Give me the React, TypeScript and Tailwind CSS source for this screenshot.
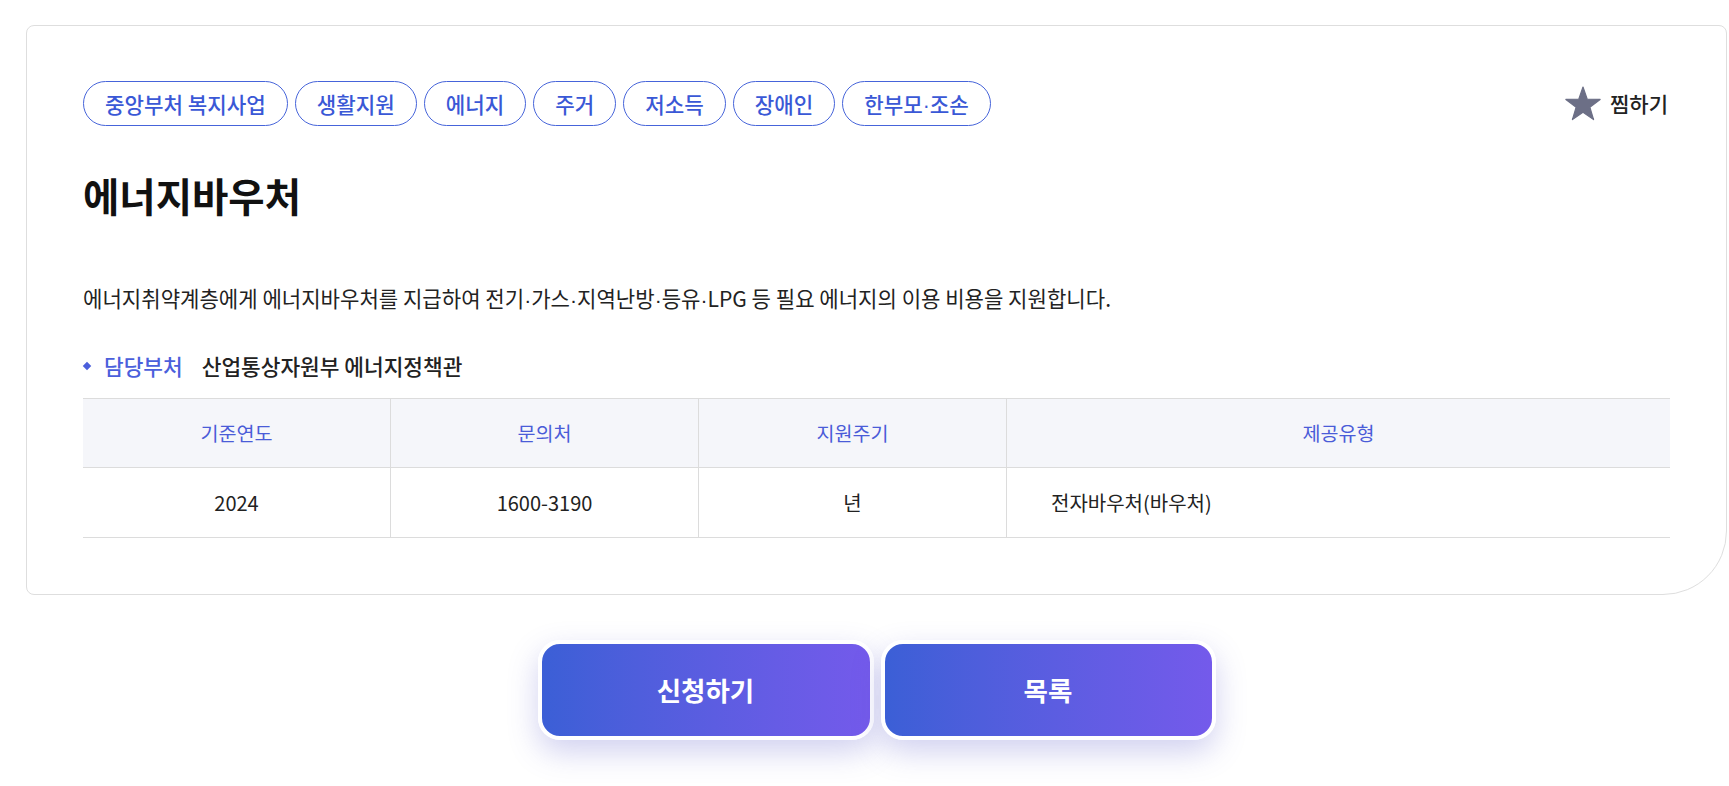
import React from 'react';

const TAGS = ['중앙부처 복지사업', '생활지원', '에너지', '주거', '저소득', '장애인', '한부모·조손'];

const COLUMNS = [
  { head: '기준연도', value: '2024', align: 'center' },
  { head: '문의처', value: '1600-3190', align: 'center' },
  { head: '지원주기', value: '년', align: 'center' },
  { head: '제공유형', value: '전자바우처(바우처)', align: 'left' },
];

// the CJK font draws · very wide, so the dot gets a latin face
const withDots = (text: string) =>
  text.split('·').map((part, i) => (
    <React.Fragment key={i}>
      {i > 0 && <span className="font-['Liberation_Sans',sans-serif] leading-[0]">·</span>}
      {part}
    </React.Fragment>
  ));

const StarIcon = () => (
  <svg width="36" height="35" viewBox="0 0 36 35" className="overflow-visible" aria-hidden="true">
    <path
      d="M18 1 L22.23 13.18 L35.12 13.44 L24.85 21.22 L28.58 33.56 L18 26.2 L7.42 33.56 L11.15 21.22 L0.88 13.44 L13.77 13.18 Z"
      fill="#6c6f86"
      stroke="#6c6f86"
      strokeWidth="1.2"
      strokeLinejoin="round"
    />
  </svg>
);

export default function App() {
  return (
    <div className="min-h-screen bg-white pt-[25px] pb-10 font-['Noto_Sans_CJK_KR','Noto_Sans',sans-serif] text-[#222]">
      <div className="ml-[26px] w-[1701px] rounded-lg rounded-br-[64px] border border-[#dedede] bg-white px-[56px] pt-[55px] pb-[56px]">
        <div className="flex h-[45px] items-center justify-between">
          <div className="flex gap-[7px]">
            {TAGS.map(tag => (
              <span
                key={tag}
                className="h-[45px] rounded-full border border-[#4664da] px-[21px] py-[8px] text-[21.2px] leading-[27px] font-medium text-[#3a58d6]"
              >
                {withDots(tag)}
              </span>
            ))}
          </div>
          <button className="mr-[2px] flex items-center gap-[9px] text-[21px] font-medium text-[#222]">
            <StarIcon />
            찜하기
          </button>
        </div>

        <h1 className="mt-[45px] text-[39.5px] leading-[48px] font-bold text-[#111]">에너지바우처</h1>

        <p className="mt-[64px] h-[30px] text-[21.1px] leading-[30px] text-[#222]">
          {withDots('에너지취약계층에게 에너지바우처를 지급하여 전기·가스·지역난방·등유·LPG 등 필요 에너지의 이용 비용을 지원합니다.')}
        </p>

        <div className="mt-[38px] flex items-center text-[21.4px] leading-[30px]">
          <span className="ml-[1px] h-[6px] w-[6px] rotate-45 bg-[#4b5fdc]" />
          <span className="ml-[14px] font-medium text-[#4b5fdc]">담당부처</span>
          <span className="ml-[19px] font-medium text-[#222]">산업통상자원부 에너지정책관</span>
        </div>

        <div className="mt-[17px] grid grid-cols-[307px_308px_308px_1fr] border-t border-[#dcdcdc]">
          {COLUMNS.map((col, i) => (
            <div
              key={col.head}
              className={`flex h-[69px] items-center justify-center border-b border-[#dcdcdc] bg-[#f5f6fa] text-[19.6px] text-[#4a5cd8] ${i > 0 ? 'border-l' : ''}`}
            >
              {col.head}
            </div>
          ))}
          {COLUMNS.map((col, i) => (
            <div
              key={col.value}
              className={`flex h-[70px] items-center border-b border-[#dcdcdc] text-[20px] text-[#222] ${i > 0 ? 'border-l' : ''} ${col.align === 'left' ? 'justify-start pl-[44px]' : 'justify-center'}`}
            >
              {col.value}
            </div>
          ))}
        </div>
      </div>

      <div className="ml-[26px] mt-[45px] flex w-[1701px] justify-center gap-[7px]">
        <button className="h-[100px] w-[336px] rounded-[22px] border-4 border-white bg-gradient-to-r from-[#3b5fd6] to-[#745aeb] text-[26.5px] font-bold text-white shadow-[0_12px_30px_rgba(90,90,200,0.28)]">
          신청하기
        </button>
        <button className="h-[100px] w-[335px] rounded-[22px] border-4 border-white bg-gradient-to-r from-[#3b5fd6] to-[#745aeb] text-[26.5px] font-bold text-white shadow-[0_12px_30px_rgba(90,90,200,0.28)]">
          목록
        </button>
      </div>
    </div>
  );
}
